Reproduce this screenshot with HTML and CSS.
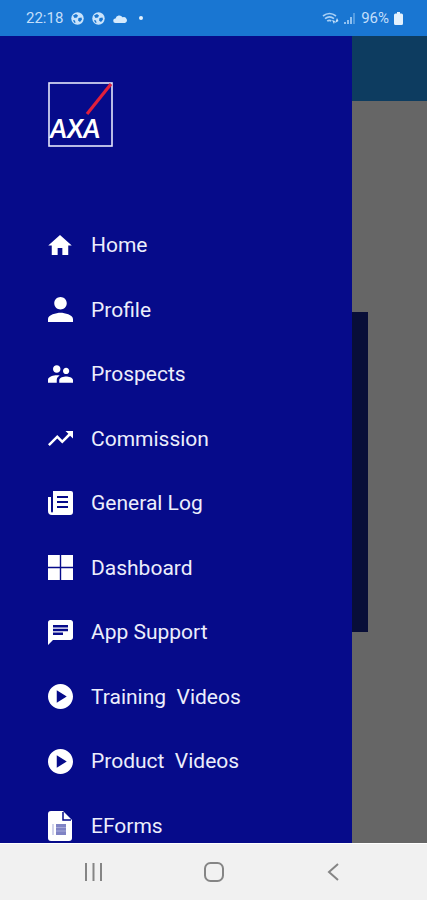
FILE: index.html
```html
<!DOCTYPE html>
<html lang="en">
<head>
    <meta charset="UTF-8">
    <meta name="viewport" content="width=device-width, initial-scale=1.0">
    <title>AXA</title>
    <link rel="stylesheet" href="styles.css">
</head>
<body>
    <header class="status-bar">
        <div class="status-group">
            <span>22:18</span>
            <svg width="13" height="13" viewBox="0 0 13 13"><circle cx="6.5" cy="6.5" r="6.2" fill="#c9e3fb"/><path d="M2 3.5l3-1.5 2 1.500-1 2-2.500.5zM7.500 6l3-.5.5 2-2 2.500-2-1.500zM2 8l2 .5.5 2.500-1.500-.5z" fill="#1976d2"/></svg>
            <svg width="13" height="13" viewBox="0 0 13 13"><circle cx="6.5" cy="6.5" r="6.2" fill="#c9e3fb"/><path d="M2 3.5l3-1.5 2 1.500-1 2-2.500.5zM7.500 6l3-.5.5 2-2 2.500-2-1.500zM2 8l2 .5.5 2.500-1.500-.5z" fill="#1976d2"/></svg>
            <svg width="14" height="9" viewBox="0 0 14 9"><path d="M2.500 9a2.300 2.300 0 0 1 0-4.600A3.800 3.800 0 0 1 9.500 3.300 3 3 0 0 1 12 9z" fill="#d6eafc"/></svg>
            <span class="dot"></span>
        </div>
        <div class="status-group status-right">
            <svg width="17" height="13" viewBox="0 0 17 13"><g fill="none" stroke="#a9d0f5" stroke-width="1.700"><path d="M1 4q6.500-5 13 0M3 6.700q4.500-3.500 9 0M5.200 9.200q2.300-1.800 4 0"/></g><path d="M10 8l2 4 1-3zM13 11l2-5 1.500 3z" fill="#c9e3fb"/></svg>
            <svg width="12" height="12" viewBox="0 0 12 12"><g fill="#8fc1f0"><path d="M0 10h2v2H0zM3 8h2v4H3z"/><path d="M6 5h2v7H6z"/><path d="M9 1h2v11H9z" opacity=".5"/></g></svg>
            <span>96%</span>
            <svg width="9" height="13" viewBox="0 0 9 13"><path d="M3 0h3v1.500h1.500Q9 1.500 9 3v8.500Q9 13 7.500 13h-6Q0 13 0 11.500V3q0-1.500 1.500-1.500H3z" fill="#e3f1fd"/></svg>
        </div>
    </header>

    <main class="screen">
        <div class="app-bar"></div>
        <div class="card"></div>

        <nav class="drawer">
            <svg class="logo" viewBox="0 0 65 65" role="img" aria-label="AXA">
                <rect x="1" y="1" width="63" height="63" fill="none" stroke="#e4e6fa" stroke-width="1.600"/>
                <path d="M39 32L63 2" stroke="#e0203c" stroke-width="3.200"/>
                <text class="logo-text" x="2" y="56">AXA</text>
            </svg>

            <ul class="menu">
                <li><a href="#home">
                    <span class="icon"><svg width="24" height="20" viewBox="2 3 20 17"><path d="M10 20v-6h4v6h5v-8h3L12 3 2 12h3v8z"/></svg></span>
                    Home
                </a></li>
                <li><a href="#profile">
                    <span class="icon"><svg width="25" height="25" viewBox="4 4 16 16"><path d="M12 12c2.210 0 4-1.790 4-4s-1.790-4-4-4-4 1.790-4 4 1.790 4 4 4zm0 2c-2.670 0-8 1.340-8 4v2h16v-2c0-2.660-5.330-4-8-4z"/></svg></span>
                    Profile
                </a></li>
                <li><a href="#prospects">
                    <span class="icon"><svg width="25" height="18" viewBox="2 5 20 14"><path d="M16.500 12c1.380 0 2.490-1.120 2.490-2.500S17.880 7 16.500 7 14 8.120 14 9.500s1.120 2.500 2.500 2.500zM9 11c1.660 0 2.990-1.340 2.990-3S10.660 5 9 5 6 6.340 6 8s1.340 3 3 3zm7.500 3c-1.830 0-5.500.92-5.500 2.750V19h11v-2.250c0-1.830-3.670-2.750-5.500-2.750zM9 13c-2.330 0-7 1.170-7 3.500V19h7v-2.250c0-.85.33-2.340 2.370-3.470C10.500 13.100 9.660 13 9 13z"/></svg></span>
                    Prospects
                </a></li>
                <li><a href="#commission">
                    <span class="icon"><svg width="25" height="15" viewBox="2 6 20 12"><path d="M16 6l2.290 2.290-4.880 4.880-4-4L2 16.590 3.410 18l6-6 4 4 6.300-6.290L22 12V6z"/></svg></span>
                    Commission
                </a></li>
                <li><a href="#general-log">
                    <span class="icon"><svg width="25" height="24" viewBox="0 0 25 24"><path fill-rule="evenodd" d="M5 0h18a2 2 0 0 1 2 2v19a3 3 0 0 1-3 3H4a4 4 0 0 1-4-4V6h3v14q0 1.500 1 1.500T5 20zM9 5v2h11V5zm0 5v2h11v-2zm0 5v2h11v-2z"/></svg></span>
                    General Log
                </a></li>
                <li><a href="#dashboard">
                    <span class="icon"><svg width="25" height="25" viewBox="0 0 25 25"><path d="M0 0h11.800v11.800H0zM13.200 0H25v11.800H13.200zM0 13.200h11.800V25H0zM13.200 13.200H25V25H13.200z"/></svg></span>
                    Dashboard
                </a></li>
                <li><a href="#app-support">
                    <span class="icon"><svg width="25" height="25" viewBox="2 2 20 20"><path d="M20 2H4c-1.100 0-1.990.9-1.990 2L2 22l4-4h14c1.100 0 2-.9 2-2V4c0-1.100-.9-2-2-2zM6 9h12v2H6V9zm8 5H6v-2h8v2zm4-6H6V6h12v2z"/></svg></span>
                    App Support
                </a></li>
                <li><a href="#training-videos">
                    <span class="icon"><svg width="25" height="25" viewBox="2 2 20 20"><path d="M12 2C6.480 2 2 6.480 2 12s4.480 10 10 10 10-4.480 10-10S17.520 2 12 2zM9 17V7l8 5z" fill-rule="evenodd"/></svg></span>
                    Training&nbsp; Videos
                </a></li>
                <li><a href="#product-videos">
                    <span class="icon"><svg width="25" height="25" viewBox="2 2 20 20"><path d="M12 2C6.480 2 2 6.480 2 12s4.480 10 10 10 10-4.480 10-10S17.520 2 12 2zM9 17V7l8 5z" fill-rule="evenodd"/></svg></span>
                    Product&nbsp; Videos
                </a></li>
                <li><a href="#eforms">
                    <span class="icon"><svg width="24" height="30" viewBox="0 0 24 30"><path d="M3 0h12l9 9v18a3 3 0 0 1-3 3H3a3 3 0 0 1-3-3V3a3 3 0 0 1 3-3z"/><path d="M15 1v8h8" fill="none" stroke="#060b8a" stroke-width="1.500"/><path d="M8 13h10v11H8z" fill="#7f83c4"/><path d="M5 13v11M8 16.500h10M8 20h10" fill="none" stroke="#a5a8d8"/></svg></span>
                    EForms
                </a></li>
            </ul>
        </nav>
    </main>

    <footer class="nav-bar">
        <button type="button" aria-label="Recent apps"><svg width="20" height="20" viewBox="0 0 20 20"><path d="M2 1v18M9.500 1v18M17 1v18"/></svg></button>
        <button type="button" aria-label="Home"><svg width="20" height="20" viewBox="0 0 20 20"><rect x="1" y="1" width="18" height="18" rx="5.500"/></svg></button>
        <button type="button" aria-label="Back"><svg width="20" height="20" viewBox="0 0 20 20"><path d="M15 2L6 10l9 8"/></svg></button>
    </footer>
</body>
</html>
```
FILE: styles.css
```css
* {
    box-sizing: border-box;
}

body {
    margin: 0;
    height: 100vh;
    display: flex;
    flex-direction: column;
    font-family: Roboto, "Liberation Sans", sans-serif;
    overflow: hidden;
}

.status-bar {
    height: 36px;
    flex: none;
    padding: 0 24px 0 26px;
    display: flex;
    align-items: center;
    justify-content: space-between;
    background: #1976d2;
    color: #c3dffa;
    font-size: 15px;
}

.status-group {
    display: flex;
    align-items: center;
    gap: 8px;
}

.status-right {
    gap: 5px;
}

.dot {
    width: 4px;
    height: 4px;
    margin-left: 4px;
    border-radius: 50%;
    background: #e3f1fd;
}

.screen {
    position: relative;
    flex: 1;
    min-height: 0;
    background: #666;
}

.app-bar {
    height: 65px;
    background: #0d3c60;
}

.card {
    height: 320px;
    margin: 211px 59px 0 16px;
    background: #080e38;
}

/* drawer slides over the page */
.drawer {
    position: absolute;
    top: 0;
    bottom: 0;
    left: 0;
    right: 75px;
    padding: 46px 48px 0;
    display: flex;
    flex-direction: column;
    background: #060b8a;
}

.logo {
    width: 65px;
    height: 65px;
    flex: none;
    margin-bottom: 81px;
}

.logo-text {
    font: italic bold 26px Lato, "Liberation Sans", sans-serif;
    fill: #fff;
}

.menu {
    flex: 1;
    margin: 0;
    padding: 0;
    list-style: none;
    display: flex;
    flex-direction: column;
    justify-content: space-between;
}

.menu a {
    height: 34px;
    display: flex;
    align-items: center;
    gap: 18px;
    color: #eceefc;
    font-size: 21px;
    text-decoration: none;
    white-space: nowrap;
}

.icon {
    width: 25px;
    flex: none;
    display: flex;
    fill: #fff;
}

.nav-bar {
    height: 57px;
    flex: none;
    padding: 0 34px;
    display: flex;
    border-top: 1px solid #fff;
    background: #f1f1f1;
}

.nav-bar button {
    flex: 1;
    display: flex;
    align-items: center;
    justify-content: center;
    padding: 0;
    border: none;
    background: none;
}

.nav-bar svg {
    fill: none;
    stroke: #858585;
    stroke-width: 2;
}
```
